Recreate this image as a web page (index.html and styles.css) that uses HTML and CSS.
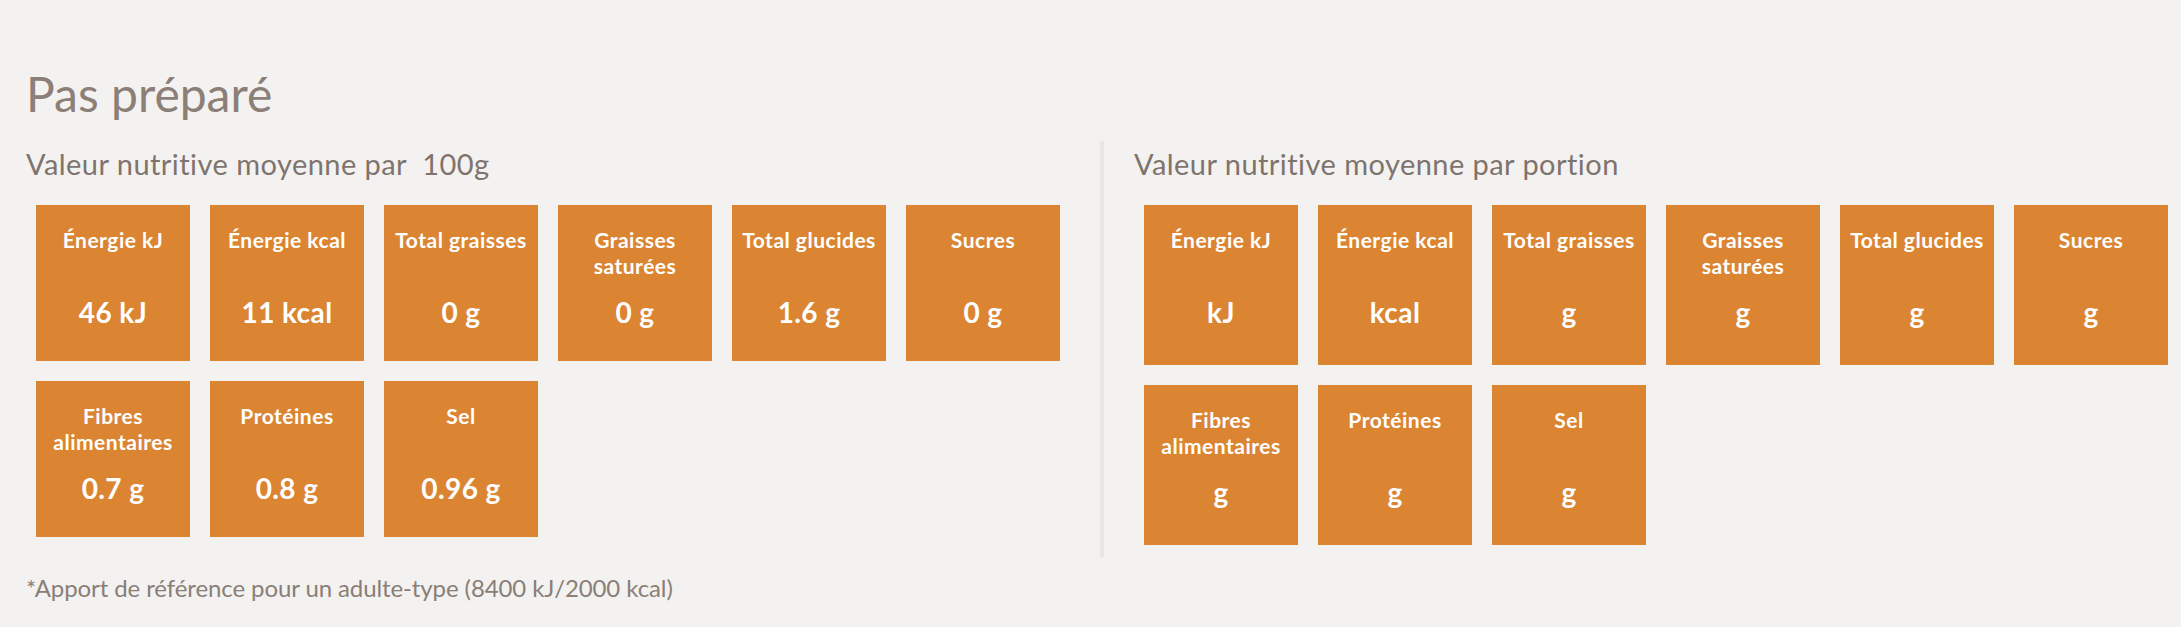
FILE: index.html
```html
<!DOCTYPE html>
<html lang="fr">
<head>
<meta charset="utf-8">
<title>Pas préparé</title>
<link rel="stylesheet" href="styles.css">
</head>
<body>
<div class="page">
  <h2 class="title">Pas préparé</h2>
  <div class="columns">
    <section class="col col-left">
      <h3 class="subtitle">Valeur nutritive moyenne par &nbsp;100g</h3>
      <div class="grid">
        <div class="box"><div class="label">Énergie kJ</div><div class="value">46 kJ</div></div>
        <div class="box"><div class="label">Énergie kcal</div><div class="value">11 kcal</div></div>
        <div class="box"><div class="label">Total graisses</div><div class="value">0 g</div></div>
        <div class="box"><div class="label">Graisses saturées</div><div class="value">0 g</div></div>
        <div class="box"><div class="label">Total glucides</div><div class="value">1.6 g</div></div>
        <div class="box"><div class="label">Sucres</div><div class="value">0 g</div></div>
        <div class="box"><div class="label">Fibres alimentaires</div><div class="value">0.7 g</div></div>
        <div class="box"><div class="label">Protéines</div><div class="value">0.8 g</div></div>
        <div class="box"><div class="label">Sel</div><div class="value">0.96 g</div></div>
      </div>
    </section>
    <section class="col col-right">
      <h3 class="subtitle">Valeur nutritive moyenne par portion</h3>
      <div class="grid grid-tall">
        <div class="box"><div class="label">Énergie kJ</div><div class="value">kJ</div></div>
        <div class="box"><div class="label">Énergie kcal</div><div class="value">kcal</div></div>
        <div class="box"><div class="label">Total graisses</div><div class="value">g</div></div>
        <div class="box"><div class="label">Graisses saturées</div><div class="value">g</div></div>
        <div class="box"><div class="label">Total glucides</div><div class="value">g</div></div>
        <div class="box"><div class="label">Sucres</div><div class="value">g</div></div>
        <div class="box"><div class="label">Fibres alimentaires</div><div class="value">g</div></div>
        <div class="box"><div class="label">Protéines</div><div class="value">g</div></div>
        <div class="box"><div class="label">Sel</div><div class="value">g</div></div>
      </div>
    </section>
  </div>
  <p class="note">*Apport de référence pour un adulte-type (8400 kJ/2000 kcal)</p>
</div>
</body>
</html>
```

FILE: styles.css
```css
html, body {
  margin: 0;
  padding: 0;
  background: #f3f2f0;
}

body {
  font-family: Lato, "Open Sans", "Liberation Sans", sans-serif;
  font-variant-ligatures: none;
  color: #8a7e77;
}

.page {
  padding: 0 0 0 26px;
}

.title {
  margin: 67px 0 0 0;
  font-size: 48px;
  line-height: 53px;
  font-weight: 400;
  color: #8b7f78;
}

.columns {
  display: flex;
  margin-top: 21px;
}

.col {
  width: 1044px;
  padding-bottom: 12px;
}

.col-left {
  margin-right: 30px;
}

.col-right {
  border-left: 4px solid #e7e6e3;
  padding-left: 30px;
}

.subtitle {
  margin: 0;
  padding-top: 7px;
  font-size: 29px;
  line-height: 31px;
  letter-spacing: 0.45px;
  font-weight: 400;
  color: #7f746d;
}

.grid {
  display: grid;
  grid-template-columns: repeat(6, 154px);
  column-gap: 20px;
  row-gap: 20px;
  padding-left: 10px;
  margin-top: 26px;
}

.box {
  height: 156px;
  background: #db8533;
  color: #ffffff;
  text-align: center;
  padding: 22px 2px 0;
  box-sizing: border-box;
  font-weight: 700;
}

.grid-tall .box {
  height: 160px;
}

.label {
  height: 52px;
  font-size: 21px;
  line-height: 26px;
  letter-spacing: 0.5px;
}

.value {
  margin-top: 16px;
  font-size: 28px;
  line-height: 34px;
  letter-spacing: 0.4px;
}

.note {
  margin: 18px 0 0 0;
  font-size: 24px;
  line-height: 26px;
  letter-spacing: -0.1px;
  color: #8a7e78;
}
```
